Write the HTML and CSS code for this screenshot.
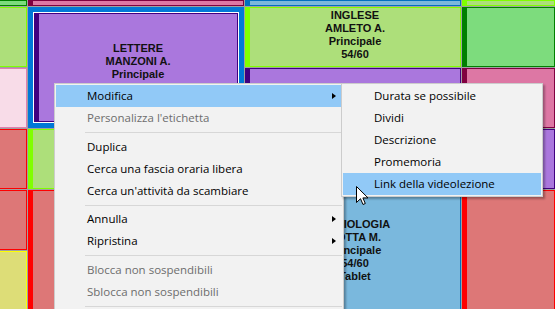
FILE: index.html
```html
<!DOCTYPE html>
<html>
<head>
    <title>Orario - menu contestuale</title>
    <link rel="stylesheet" href="styles.css">
</head>
<body>
    <div class="timetable">
        <!-- riga parziale in alto -->
        <div class="cell cut green"></div>
        <div class="cell rose"></div>
        <div class="cell sky"></div>
        <div class="cell lime"></div>

        <div class="cell cut lime"></div>
        <div class="selected">
            <div class="cell violet lifted">
                <span>LETTERE</span>
                <span>MANZONI A.</span>
                <span>Principale</span>
            </div>
        </div>
        <div class="cell lime raised">
            <span>INGLESE</span>
            <span>AMLETO A.</span>
            <span>Principale</span>
            <span>54/60</span>
        </div>
        <div class="cell green"></div>

        <div class="cell cut blush"></div>
        <div class="cell violet"></div>
        <div class="cell rose"></div>

        <div class="cell cut salmon"></div>
        <div class="cell lime"></div>
        <div class="cell rose"></div>
        <div class="cell violet"></div>

        <div class="cell cut salmon"></div>
        <div class="cell salmon tall"></div>
        <div class="cell sky tall">
            <span>SOCIOLOGIA</span>
            <span>ROTTA M.</span>
            <span>Principale</span>
            <span>54/60</span>
            <span>Tablet</span>
        </div>
        <div class="cell salmon tall"></div>

        <div class="cell cut sand"></div>
    </div>

    <div class="menu main-menu">
        <div class="item active">Modifica<i class="arrow"></i></div>
        <div class="item disabled">Personalizza l'etichetta</div>
        <div class="sep"></div>
        <div class="item">Duplica</div>
        <div class="item">Cerca una fascia oraria libera</div>
        <div class="item">Cerca un'attività da scambiare</div>
        <div class="sep"></div>
        <div class="item">Annulla<i class="arrow"></i></div>
        <div class="item">Ripristina<i class="arrow"></i></div>
        <div class="sep"></div>
        <div class="item disabled">Blocca non sospendibili</div>
        <div class="item disabled">Sblocca non sospendibili</div>
        <div class="sep"></div>
    </div>

    <div class="menu sub-menu">
        <div class="item">Durata se possibile</div>
        <div class="item">Dividi</div>
        <div class="item">Descrizione</div>
        <div class="item">Promemoria</div>
        <div class="item active">Link della videolezione</div>
    </div>

    <svg class="cursor" width="13" height="20" viewBox="0 0 13 20">
        <path d="M0.5 0.5 L0.5 16.5 L4.5 12.7 L7 18.5 L9.3 17.5 L6.9 11.9 L12 11.9 Z" fill="#fff" stroke="#000" stroke-width="1" stroke-linejoin="miter"/>
    </svg>
</body>
</html>
```

FILE: styles.css
```css
body {
    margin: 0;
    width: 555px;
    height: 309px;
    overflow: hidden;
    position: relative;
    background: #a0a0a0;
}
.timetable {
    display: grid;
    grid-template-columns: 27px 216px 216px 1fr;
    grid-template-rows: 6px repeat(5, 60px);
    gap: 1px;
    background: #a0a0a0;
    font-family: "Liberation Sans", Arial, sans-serif;
    font-size: 11px;
    font-weight: bold;
    color: #111;
}
.cell {
    --edge: #808080;
    border: 1px solid var(--edge);
    border-left-width: 5px;
    display: flex;
    flex-direction: column;
    align-items: center;
    justify-content: center;
    line-height: 13px;
    overflow: hidden;
    white-space: nowrap;
}
.cell.cut {
    border-left-width: 0;
}
.cell.tall {
    grid-row: span 2;
}
.cell.raised {
    padding-bottom: 4px;
}
.cell.lifted {
    padding-bottom: 13px;
}
.lime { background: #addf7a; --edge: #80ff00; }
.green { background: #7ddc7d; --edge: #008000; }
.rose { background: #dd77a4; --edge: #800040; }
.sky { background: #7ab8dd; --edge: #0070c0; }
.violet { background: #aa77dd; --edge: #400080; }
.salmon { background: #dd7777; --edge: #ff0000; }
.blush { background: #f8dce8; --edge: #e080b0; }
.sand { background: #dddd77; --edge: #ffff00; }

.selected {
    grid-row: span 2;
    border: 5px solid #0078d7;
    padding: 1px;
    background: #fff;
    display: flex;
}
.selected .cell {
    flex: 1;
}

.menu {
    position: absolute;
    background: #f2f2f2;
    border: 1px solid #cccccc;
    padding: 1px;
    box-shadow: 2px 2px 2px rgba(0, 0, 0, 0.3);
    font-family: "Open Sans", "Noto Sans", sans-serif;
    font-size: 11.5px;
    color: #000;
}
.main-menu {
    left: 54px;
    top: 83px;
    width: 286px;
    height: 240px;
}
.sub-menu {
    left: 341px;
    top: 83px;
    width: 198px;
}
.item {
    position: relative;
    height: 22px;
    line-height: 22px;
    padding-left: 31px;
    white-space: nowrap;
}
.item.active {
    background: #91c9f7;
}
.item.disabled {
    color: #6d6d6d;
}
.arrow {
    position: absolute;
    right: 6px;
    top: 8px;
    width: 0;
    height: 0;
    border-top: 3.5px solid transparent;
    border-bottom: 3.5px solid transparent;
    border-left: 4px solid #000;
}
.sep {
    position: relative;
    height: 6.5px;
}
.sep::after {
    content: "";
    position: absolute;
    left: 29px;
    right: 0;
    top: 3px;
    border-top: 1px solid #d7d7d7;
}
.cursor {
    position: absolute;
    left: 356px;
    top: 186px;
}
```
